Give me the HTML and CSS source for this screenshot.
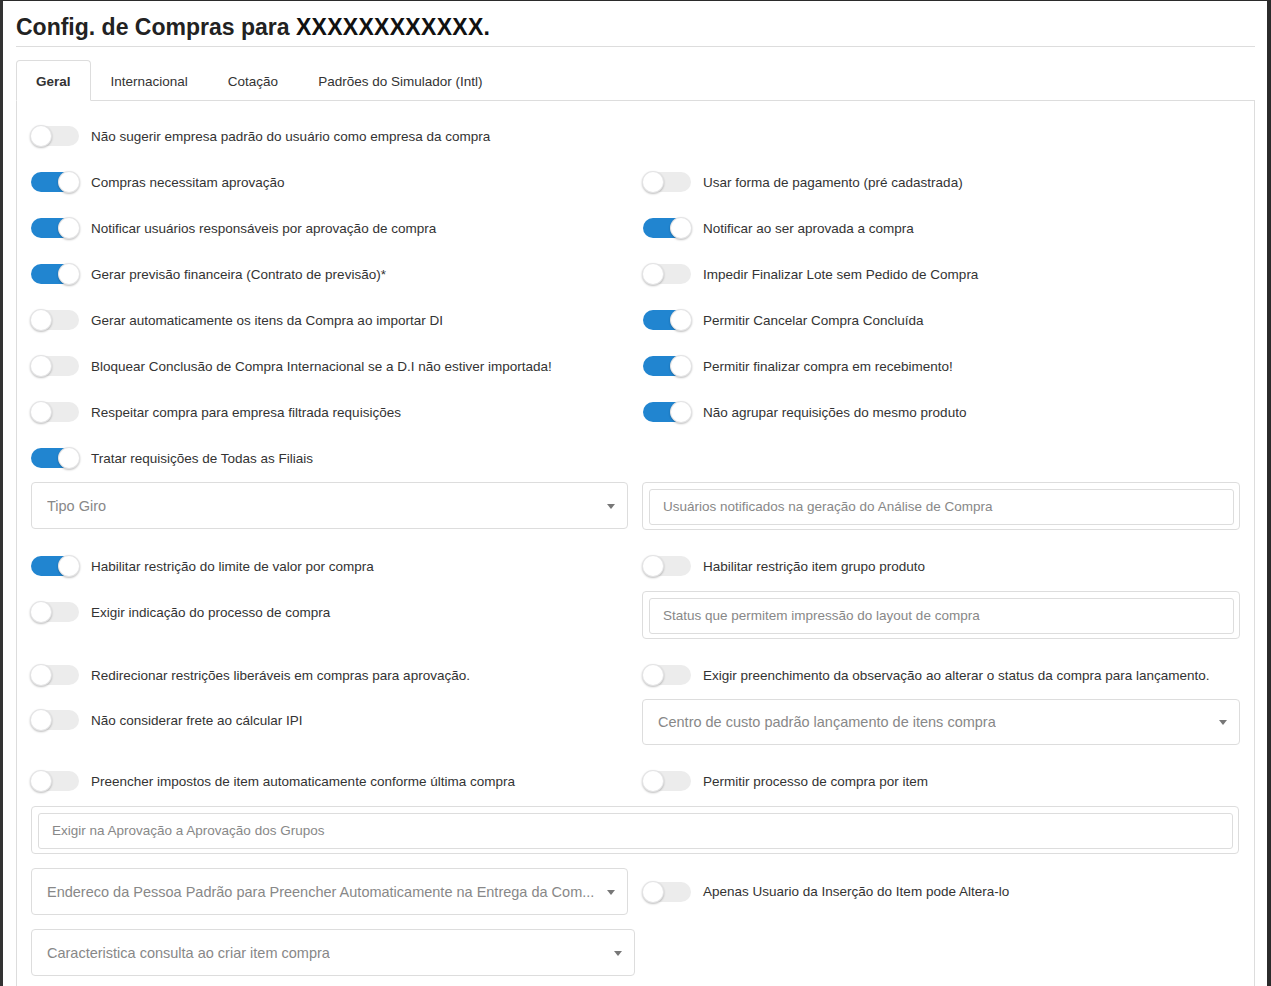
FILE: index.html
```html
<!DOCTYPE html>
<html lang="pt-BR">
<head>
<meta charset="utf-8">
<title>Config. de Compras</title>
<link rel="stylesheet" href="styles.css">
</head>
<body>
<div class="frame">
  <h1 class="title">Config. de Compras para <span class="name">XXXXXXXXXXXX.</span></h1>
  <div class="tabs">
    <div class="tab active">Geral</div>
    <div class="tab">Internacional</div>
    <div class="tab">Cotação</div>
    <div class="tab">Padrões do Simulador (Intl)</div>
    <div class="tab-fill"></div>
  </div>
  <div class="panel">
    <div class="row r-first">
      <label class="sw"><span class="track"></span><span class="lbl">Não sugerir empresa padrão do usuário como empresa da compra</span></label>
      <div></div>
    </div>
    <div class="row">
      <label class="sw on"><span class="track"></span><span class="lbl">Compras necessitam aprovação</span></label>
      <label class="sw"><span class="track"></span><span class="lbl">Usar forma de pagamento (pré cadastrada)</span></label>
    </div>
    <div class="row">
      <label class="sw on"><span class="track"></span><span class="lbl">Notificar usuários responsáveis por aprovação de compra</span></label>
      <label class="sw on"><span class="track"></span><span class="lbl">Notificar ao ser aprovada a compra</span></label>
    </div>
    <div class="row">
      <label class="sw on"><span class="track"></span><span class="lbl">Gerar previsão financeira (Contrato de previsão)*</span></label>
      <label class="sw"><span class="track"></span><span class="lbl">Impedir Finalizar Lote sem Pedido de Compra</span></label>
    </div>
    <div class="row">
      <label class="sw"><span class="track"></span><span class="lbl">Gerar automaticamente os itens da Compra ao importar DI</span></label>
      <label class="sw on"><span class="track"></span><span class="lbl">Permitir Cancelar Compra Concluída</span></label>
    </div>
    <div class="row">
      <label class="sw"><span class="track"></span><span class="lbl">Bloquear Conclusão de Compra Internacional se a D.I não estiver importada!</span></label>
      <label class="sw on"><span class="track"></span><span class="lbl">Permitir finalizar compra em recebimento!</span></label>
    </div>
    <div class="row">
      <label class="sw"><span class="track"></span><span class="lbl">Respeitar compra para empresa filtrada requisições</span></label>
      <label class="sw on"><span class="track"></span><span class="lbl">Não agrupar requisições do mesmo produto</span></label>
    </div>
    <div class="row">
      <label class="sw on"><span class="track"></span><span class="lbl">Tratar requisições de Todas as Filiais</span></label>
      <div></div>
    </div>
    <div class="row r-fields">
      <div class="select"><span class="ph">Tipo Giro</span><span class="caret"></span></div>
      <div class="multi"><div class="inp">Usuários notificados na geração do Análise de Compra</div></div>
    </div>
    <div class="row r-after">
      <label class="sw on"><span class="track"></span><span class="lbl">Habilitar restrição do limite de valor por compra</span></label>
      <label class="sw"><span class="track"></span><span class="lbl">Habilitar restrição item grupo produto</span></label>
    </div>
    <div class="row r-top">
      <label class="sw"><span class="track"></span><span class="lbl">Exigir indicação do processo de compra</span></label>
      <div class="multi m-k"><div class="inp">Status que permitem impressão do layout de compra</div></div>
    </div>
    <div class="row r-l">
      <label class="sw"><span class="track"></span><span class="lbl">Redirecionar restrições liberáveis em compras para aprovação.</span></label>
      <label class="sw"><span class="track"></span><span class="lbl">Exigir preenchimento da observação ao alterar o status da compra para lançamento.</span></label>
    </div>
    <div class="row r-top">
      <label class="sw s-up"><span class="track"></span><span class="lbl">Não considerar frete ao cálcular IPI</span></label>
      <div class="select s-m"><span class="ph">Centro de custo padrão lançamento de itens compra</span><span class="caret"></span></div>
    </div>
    <div class="row r-n">
      <label class="sw"><span class="track"></span><span class="lbl">Preencher impostos de item automaticamente conforme última compra</span></label>
      <label class="sw"><span class="track"></span><span class="lbl">Permitir processo de compra por item</span></label>
    </div>
    <div class="multi full"><div class="inp">Exigir na Aprovação a Aprovação dos Grupos</div></div>
    <div class="row r-p">
      <div class="select"><span class="ph">Endereco da Pessoa Padrão para Preencher Automaticamente na Entrega da Com...</span><span class="caret"></span></div>
      <label class="sw"><span class="track"></span><span class="lbl">Apenas Usuario da Inserção do Item pode Altera-lo</span></label>
    </div>
    <div class="row r-q">
      <div class="select s-wide"><span class="ph">Caracteristica consulta ao criar item compra</span><span class="caret"></span></div>
      <div></div>
    </div>
  </div>
</div>
</body>
</html>
```
FILE: styles.css
```css
* { box-sizing: border-box; }
html, body { margin: 0; padding: 0; height: 100%; }
body {
  font-family: "Liberation Sans", Arial, sans-serif;
  color: #333;
  background: #fff;
  overflow: hidden;
}
.frame {
  width: 1271px;
  height: 986px;
  border-top: 1px solid #2b2b2b;
  border-left: 3px solid #333;
  border-right: 4px solid #2b2b2b;
  padding: 0 12px 0 13px;
  overflow: hidden;
}
.title {
  margin: 0;
  padding: 14px 0 6px;
  font-size: 23px;
  font-weight: bold;
  color: #222;
  line-height: 25px;
  border-bottom: 1px solid #ddd;
}
.title .name { color: #111; letter-spacing: 0.3px; }
.tabs {
  display: flex;
  margin-top: 13px;
  height: 41px;
}
.tab {
  padding: 0 20px;
  height: 41px;
  line-height: 43px;
  font-size: 13.5px;
  color: #333;
  border-bottom: 1px solid #ddd;
}
.tab.active {
  font-weight: bold;
  border: 1px solid #ddd;
  border-bottom-color: #fff;
  border-radius: 4px 4px 0 0;
  padding: 0 19px;
  line-height: 41px;
}
.tab-fill { flex: 1; border-bottom: 1px solid #ddd; }
.panel {
  border: 1px solid #ddd;
  border-top: none;
  padding: 12px 14px 0 14px;
  height: 900px;
}
.row {
  display: grid;
  grid-template-columns: 597px 598px;
  column-gap: 14px;
  align-items: center;
  min-height: 46px;
}
.r-first { min-height: 45px; }
.r-fields { margin-top: 1px; align-items: start; }
.r-after { margin-top: 13px; }
.r-top { align-items: start; }
.r-l { margin-top: 13px; }
.r-n { margin-top: 13px; }
.r-p { margin-top: 14px; }
.r-q { margin-top: 14px; }

.sw {
  display: flex;
  align-items: center;
  height: 46px;
  font-size: 13.5px;
  color: #333;
  cursor: pointer;
}
.row > .sw:nth-child(2) { padding-left: 1px; }
.s-up { margin-top: -1px; }
.track {
  position: relative;
  flex: none;
  width: 48px;
  height: 20px;
  border-radius: 10px;
  background: #ececec;
  margin-right: 12px;
}
.track::after {
  content: "";
  position: absolute;
  top: -1px;
  left: -1px;
  width: 22px;
  height: 22px;
  border-radius: 50%;
  background: #fff;
  box-shadow: 0 1px 2px rgba(0,0,0,0.25), 0 0 0 1px rgba(34,36,38,0.12) inset;
}
.sw.on .track { background: #2185d0; }
.sw.on .track::after { left: 27px; }
.lbl { white-space: nowrap; }

.select {
  position: relative;
  display: flex;
  align-items: center;
  height: 47px;
  border: 1px solid #ddd;
  border-radius: 4px;
  padding: 0 30px 0 15px;
  font-size: 14.5px;
  color: #888;
  background: #fff;
}
.select .ph { white-space: nowrap; overflow: hidden; }
.caret {
  position: absolute;
  right: 12px;
  top: 50%;
  margin-top: -2px;
  width: 0;
  height: 0;
  border-left: 4px solid transparent;
  border-right: 4px solid transparent;
  border-top: 5px solid #777;
}
.s-m { margin-top: 1px; height: 46px; }
.s-wide { width: 604px; }

.multi {
  border: 1px solid #ddd;
  border-radius: 4px;
  padding: 6px 5px 6px 6px;
  height: 48px;
  background: #fff;
}
.m-k { margin-top: 2px; }
.inp {
  height: 36px;
  border: 1px solid #ddd;
  border-radius: 3px;
  padding: 0 13px;
  line-height: 34px;
  font-size: 13.5px;
  color: #888;
  white-space: nowrap;
}
.full { margin-top: 2px; width: 1208px; }
```
